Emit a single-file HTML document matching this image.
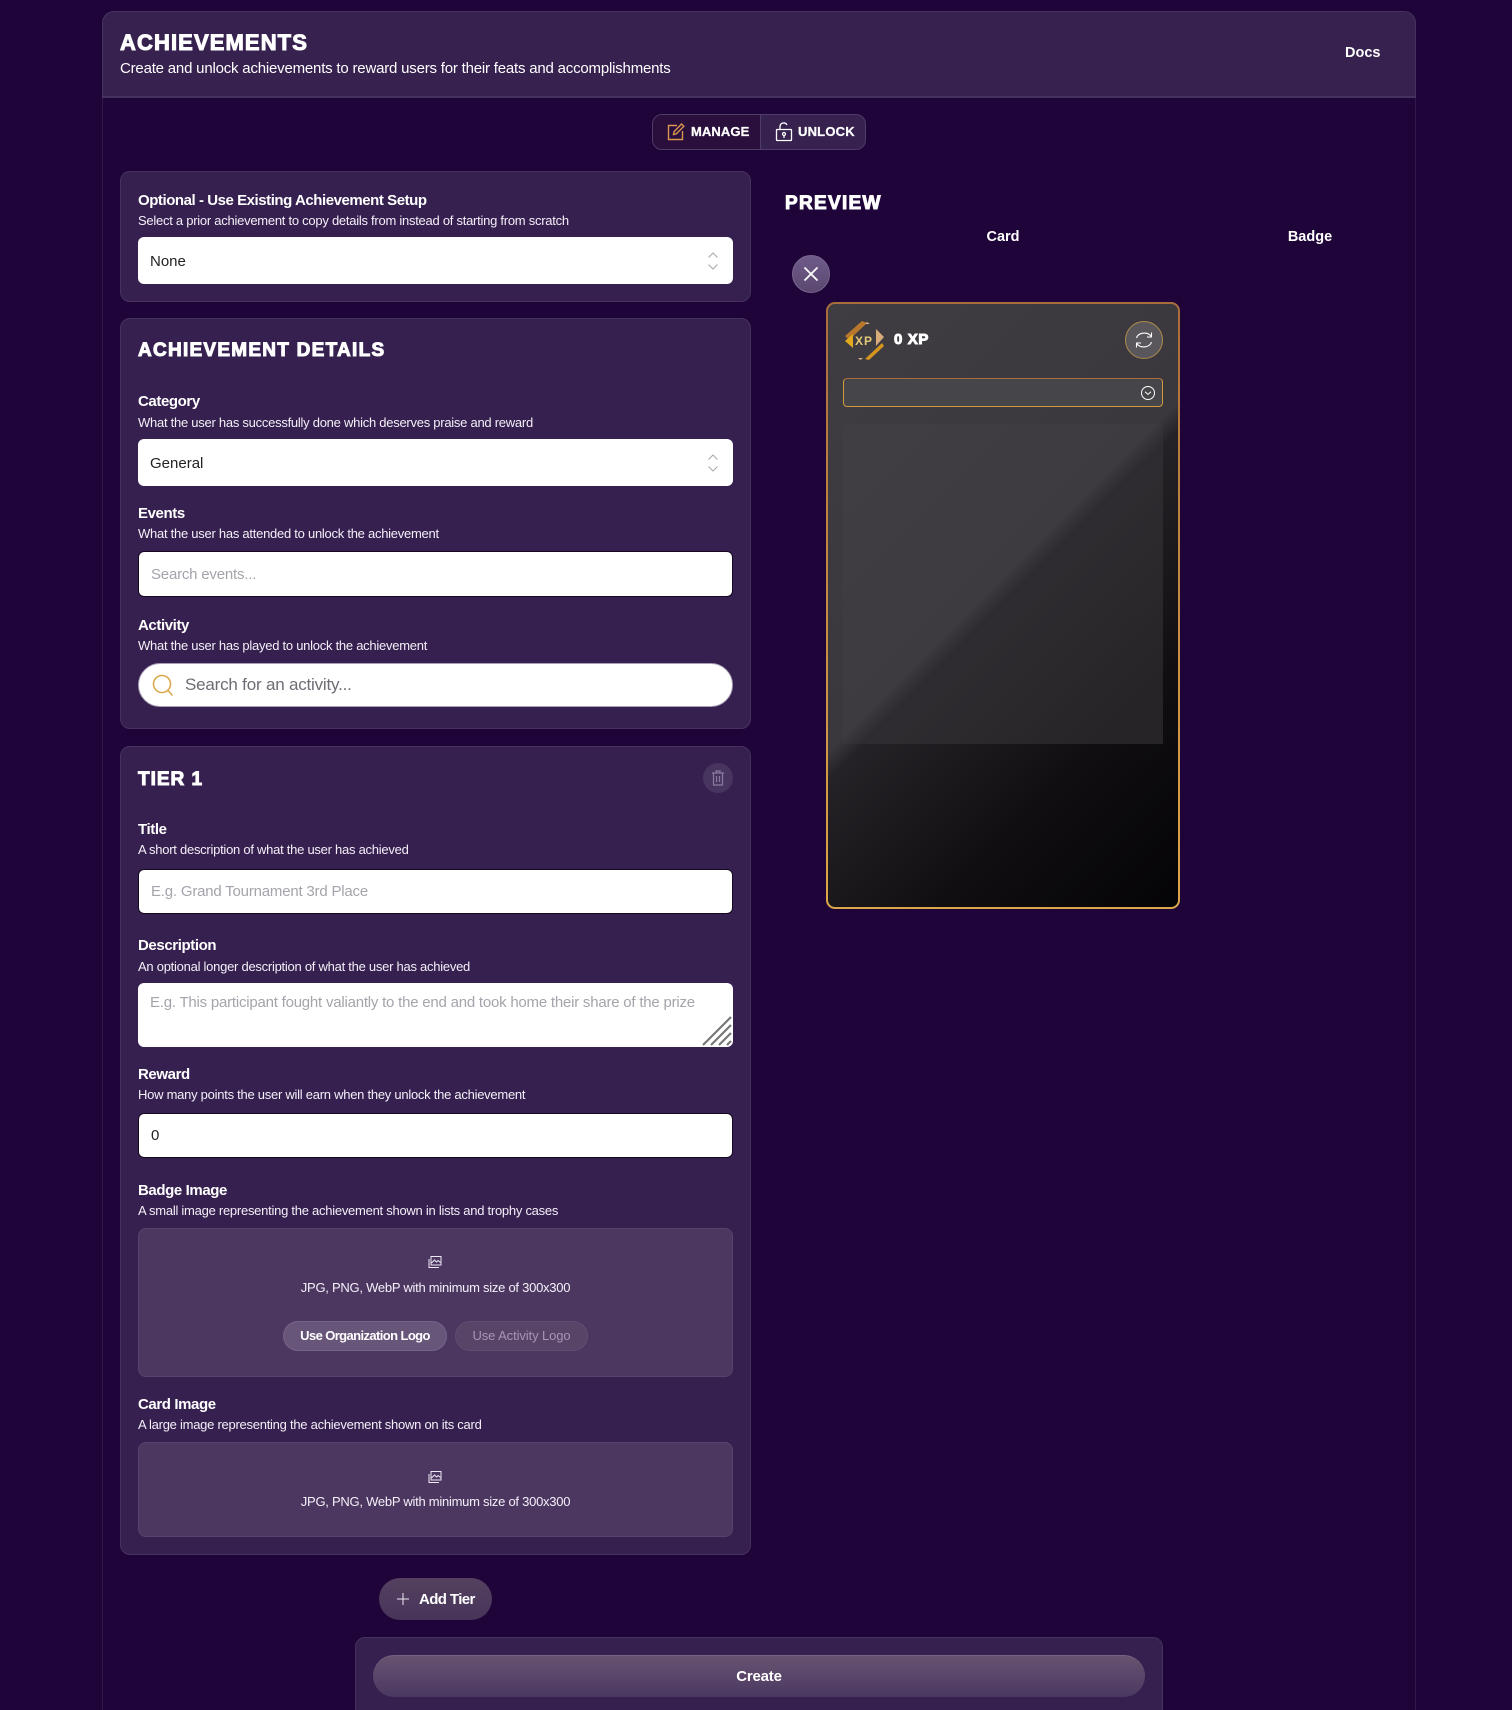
<!DOCTYPE html>
<html lang="en"><head><meta charset="utf-8"><title>Achievements</title>
<style>
*{box-sizing:border-box}
html,body{margin:0;padding:0;width:1512px;height:1710px;overflow:hidden;background:#1e0438;font-family:"Liberation Sans",sans-serif;color:#fff}
body{position:relative}
.a{position:absolute}
.t{position:absolute;white-space:nowrap;line-height:20px;height:20px}
.h{font-weight:700;-webkit-text-stroke:1px #fff}
.l{font-size:15px;font-weight:700;letter-spacing:-.4px}
.s{font-size:13px;letter-spacing:-.26px;color:#f4eff8}
.card{position:absolute;left:120px;width:631px;background:#35204f;border:1px solid #46325f;border-radius:10px}
.in{position:absolute;left:138px;width:595px;background:#fff;border-radius:6px;color:#222;font-size:15px;line-height:20px;padding-left:12px;white-space:nowrap}
.ph{color:#a5a3ab;letter-spacing:-.2px}
.box{position:absolute;left:138px;width:595px;background:#4c3761;border:1px solid #57436b;border-radius:8px}
</style></head><body>

<div class="a" style="left:102px;top:11px;width:1314px;height:1710px;border:1px solid #2f1a4b;border-radius:12px 12px 0 0"></div>
<div class="a" style="left:102px;top:11px;width:1314px;height:87px;background:#36214f;border:1px solid #46325f;border-bottom:2px solid #46325f;border-radius:12px 12px 0 0"></div>
<div class="t h" style="left:120px;top:33px;font-size:22px;letter-spacing:1.1px">ACHIEVEMENTS</div>
<div class="t" style="left:120px;top:59px;font-size:15px;letter-spacing:-.2px">Create and unlock achievements to reward users for their feats and accomplishments</div>
<div class="t" style="left:1345px;top:43px;font-size:14.5px;font-weight:700">Docs</div>

<div class="a" style="left:652px;top:114px;width:214px;height:36px;border:1px solid #4f3c69;border-radius:10px;overflow:hidden;background:#36214f">
<div class="a" style="left:0;top:0;width:108px;height:34px;background:#2a0f3c;border-right:1px solid #4f3c69"></div></div>
<svg class="a" style="left:666px;top:122px" width="20" height="20" viewBox="0 0 20 20" fill="none" stroke="#d9964f" stroke-width="1.4"><path d="M11 3.500H2.500v14h14V9"/><path d="M7.500 12.500l.7-3L15.500 2l2.300 2.300-7.400 7.500z"/></svg>
<div class="t" style="left:691px;top:122px;font-size:13px;font-weight:700;letter-spacing:.1px;-webkit-text-stroke:.25px #fff">MANAGE</div>
<svg class="a" style="left:775px;top:122px" width="18" height="20" viewBox="0 0 18 20" fill="none" stroke="#fff" stroke-width="1.3"><rect x="1.500" y="7.500" width="15" height="11" rx=".5"/><path d="M5 7.500V4.500a3.700 3.700 0 0 1 7-1.500"/><circle cx="9" cy="12" r="1.500"/><path d="M9 13.500v2.500"/></svg>
<div class="t" style="left:798px;top:122px;font-size:13px;font-weight:700;letter-spacing:.2px;-webkit-text-stroke:.25px #fff">UNLOCK</div>

<!-- Card 1 -->
<div class="card" style="top:171px;height:131px"></div>
<div class="t l" style="left:138px;top:191px;letter-spacing:-.45px">Optional - Use Existing Achievement Setup</div>
<div class="t s" style="left:138px;top:211px">Select a prior achievement to copy details from instead of starting from scratch</div>
<div class="in" style="top:237px;height:47px;line-height:50px">None</div>
<svg class="a" style="left:705px;top:250px" width="16" height="22" viewBox="0 0 16 22" fill="none" stroke="#aaa" stroke-width="1.1"><path d="M3.500 7.500L8 3l4.500 4.500M3.500 14.500L8 19l4.500-4.500"/></svg>

<!-- Card 2 -->
<div class="card" style="top:318px;height:411px"></div>
<div class="t h" style="left:138px;top:341px;font-size:19px;letter-spacing:1.26px">ACHIEVEMENT DETAILS</div>
<div class="t l" style="left:138px;top:392px">Category</div>
<div class="t s" style="left:138px;top:413px">What the user has successfully done which deserves praise and reward</div>
<div class="in" style="top:439px;height:47px;line-height:50px">General</div>
<svg class="a" style="left:705px;top:452px" width="16" height="22" viewBox="0 0 16 22" fill="none" stroke="#aaa" stroke-width="1.1"><path d="M3.500 7.500L8 3l4.500 4.500M3.500 14.500L8 19l4.500-4.500"/></svg>
<div class="t l" style="left:138px;top:504px">Events</div>
<div class="t s" style="left:138px;top:524px">What the user has attended to unlock the achievement</div>
<div class="in ph" style="top:551px;height:46px;line-height:46px;border:1px solid #15081f">Search events...</div>
<div class="t l" style="left:138px;top:616px">Activity</div>
<div class="t s" style="left:138px;top:636px">What the user has played to unlock the achievement</div>
<div class="a" style="left:138px;top:663px;width:595px;height:44px;background:#fff;border:1px solid #a9a0b5;border-radius:22px"></div>
<svg class="a" style="left:150px;top:672px" width="26" height="28" viewBox="0 0 26 28" fill="none" stroke="#dca94f" stroke-width="1.6"><circle cx="12" cy="12" r="8.500"/><path d="M18 18.500l4.500 5"/></svg>
<div class="t" style="left:185px;top:675px;font-size:17px;color:#6e6c75;letter-spacing:-.2px">Search for an activity...</div>

<!-- Card 3 -->
<div class="card" style="top:746px;height:809px"></div>
<div class="t h" style="left:138px;top:770px;font-size:19px;letter-spacing:1px">TIER 1</div>
<div class="a" style="left:703px;top:763px;width:30px;height:30px;border-radius:50%;background:#48355f"></div>
<svg class="a" style="left:711px;top:770px" width="14" height="16" viewBox="0 0 14 16" fill="none" stroke="#8b7a9e" stroke-width="1.2"><path d="M1 3h12M5 3V1h4v2M2.500 3v12h9V3M5.500 6v6M8.500 6v6"/></svg>
<div class="t l" style="left:138px;top:820px">Title</div>
<div class="t s" style="left:138px;top:840px">A short description of what the user has achieved</div>
<div class="in ph" style="top:869px;height:45px;line-height:44px;border:1px solid #15081f">E.g. Grand Tournament 3rd Place</div>
<div class="t l" style="left:138px;top:936px">Description</div>
<div class="t s" style="left:138px;top:957px">An optional longer description of what the user has achieved</div>
<div class="in ph" style="top:983px;height:64px;line-height:20px;padding-top:10px;padding-left:12px;letter-spacing:-.22px">E.g. This participant fought valiantly to the end and took home their share of the prize</div>
<svg class="a" style="left:700px;top:1015px" width="32" height="32" viewBox="0 0 32 32" stroke="#777" stroke-width="2.200"><path d="M3 30L31 2M11 30L31 10M19 30L31 18M27 30l4-4"/></svg>
<div class="t l" style="left:138px;top:1065px">Reward</div>
<div class="t s" style="left:138px;top:1085px">How many points the user will earn when they unlock the achievement</div>
<div class="in" style="top:1113px;height:45px;line-height:43px;border:1px solid #15081f">0</div>
<div class="t l" style="left:138px;top:1181px">Badge Image</div>
<div class="t s" style="left:138px;top:1201px">A small image representing the achievement shown in lists and trophy cases</div>
<div class="box" style="top:1228px;height:149px"></div>
<svg class="a" style="left:428px;top:1255px" width="14" height="14" viewBox="0 0 14 14" fill="none" stroke="#efe9f3" stroke-width="1"><rect x="3" y="1.500" width="10" height="8.500"/><path d="M1 4v8.500h10M3.500 8l3-3 2 2 1.500-1.500 2.500 2"/></svg>
<div class="t s" style="left:138px;width:595px;top:1278px;text-align:center">JPG, PNG, WebP with minimum size of 300x300</div>
<div class="a" style="left:283px;top:1321px;width:164px;height:30px;border-radius:15px;background:#67557a;border:1px solid #75648a;font-size:13px;font-weight:700;letter-spacing:-.6px;line-height:28px;text-align:center">Use Organization Logo</div>
<div class="a" style="left:455px;top:1321px;width:133px;height:30px;border-radius:15px;background:#574466;border:1px solid #604d70;font-size:13px;color:#a696b5;letter-spacing:-.1px;line-height:28px;text-align:center">Use Activity Logo</div>
<div class="t l" style="left:138px;top:1395px">Card Image</div>
<div class="t s" style="left:138px;top:1415px">A large image representing the achievement shown on its card</div>
<div class="box" style="top:1442px;height:95px"></div>
<svg class="a" style="left:428px;top:1470px" width="14" height="14" viewBox="0 0 14 14" fill="none" stroke="#efe9f3" stroke-width="1"><rect x="3" y="1.500" width="10" height="8.500"/><path d="M1 4v8.500h10M3.500 8l3-3 2 2 1.500-1.500 2.500 2"/></svg>
<div class="t s" style="left:138px;width:595px;top:1492px;text-align:center">JPG, PNG, WebP with minimum size of 300x300</div>

<!-- Add tier -->
<div class="a" style="left:379px;top:1578px;width:113px;height:42px;border-radius:21px;background:linear-gradient(180deg,#54415f,#47345a)"></div>
<svg class="a" style="left:397px;top:1593px" width="12" height="12" viewBox="0 0 12 12" stroke="#efe9f3" stroke-width="1"><path d="M6 0v12M0 6h12"/></svg>
<div class="t" style="left:419px;top:1590px;font-size:15px;font-weight:700;letter-spacing:-.6px">Add Tier</div>

<!-- Create -->
<div class="a" style="left:355px;top:1637px;width:808px;height:90px;background:#35204f;border:1px solid #46325f;border-radius:10px"></div>
<div class="a" style="left:373px;top:1655px;width:772px;height:42px;border-radius:21px;background:linear-gradient(180deg,#675370,#4b3861);border-top:1px solid #75627f"></div>
<div class="t" style="left:373px;width:772px;top:1667px;text-align:center;font-size:15px;font-weight:700;letter-spacing:-.2px">Create</div>

<!-- Preview -->
<div class="t h" style="left:785px;top:194px;font-size:19px;letter-spacing:1.3px">PREVIEW</div>
<div class="t" style="left:903px;width:200px;top:227px;text-align:center;font-size:14.5px;font-weight:700">Card</div>
<div class="t" style="left:1210px;width:200px;top:227px;text-align:center;font-size:14.5px;font-weight:700">Badge</div>
<div class="a" style="left:792px;top:255px;width:38px;height:38px;border-radius:50%;background:linear-gradient(180deg,#6f5b8a,#5b4870);border:1px solid #7a678f"></div>
<svg class="a" style="left:803px;top:266px" width="16" height="16" viewBox="0 0 16 16" stroke="#fff" stroke-width="1.800"><path d="M1.500 1.500l13 13M14.500 1.500l-13 13"/></svg>

<div class="a" style="left:826px;top:302px;width:354px;height:607px;border-radius:9px;padding:2px;background:linear-gradient(180deg,#a96c3c 0%,#b98240 30%,#dca64a 100%)">
<div style="width:100%;height:100%;border-radius:7px;background:linear-gradient(135deg,#3f3d41 0%,#3a383c 47%,#242226 50%,#1a181b 63%,#100e11 75%,#040305 100%)"></div></div>
<div class="a" style="left:843px;top:424px;width:320px;height:320px;background:linear-gradient(135deg,rgba(255,255,255,.015) 0%,rgba(255,255,255,.015) 50%,rgba(255,255,255,.05) 55%,rgba(255,255,255,.1) 100%)"></div>

<svg class="a" style="left:843px;top:319px" width="44" height="44" viewBox="0 0 44 44">
<polygon points="2,17 19,2 24,4 6,21" fill="#b9772e"/>
<polygon points="2,22 10,15 10,29" fill="#e2a81f"/>
<polygon points="33,10 41,18 33,27" fill="#d9ab7a"/>
<polygon points="22,40 39,24 41,27 26,41" fill="#d6951f"/>
<polygon points="22,5 24,3 27,5" fill="#d6b088"/>
<polygon points="15,39 20,39 17.500,41" fill="#d6b088"/>
<text x="21" y="26" text-anchor="middle" font-family="Liberation Sans" font-weight="700" font-size="12" letter-spacing="1" fill="#e6c977">XP</text>
</svg>
<div class="t h" style="left:894px;top:330px;font-size:15px;letter-spacing:.6px">0 XP</div>
<div class="a" style="left:1125px;top:321px;width:38px;height:38px;border-radius:50%;background:#59575c;border:1px solid #b08a4c"></div>
<svg class="a" style="left:1133px;top:329px" width="22" height="22" viewBox="0 0 22 22" fill="none" stroke="#fff" stroke-width="1.100"><path d="M3.500 9a8 6.500 0 0 1 14-2.500l1 1.500M18.500 3.500V8h-4.500M18.500 13a8 6.500 0 0 1-14 2.500l-1-1.500M3.500 18.500V14H8"/></svg>
<div class="a" style="left:843px;top:378px;width:320px;height:29px;border-radius:4px;border:1px solid #d09a3f;border-top-color:#a96c3c;background:#464549"></div>
<svg class="a" style="left:1140px;top:385px" width="16" height="16" viewBox="0 0 16 16" fill="none" stroke="#fff" stroke-width="1"><circle cx="8" cy="8" r="6.500"/><path d="M5 6.800l3 2.600 3-2.600"/></svg>
</body></html>
